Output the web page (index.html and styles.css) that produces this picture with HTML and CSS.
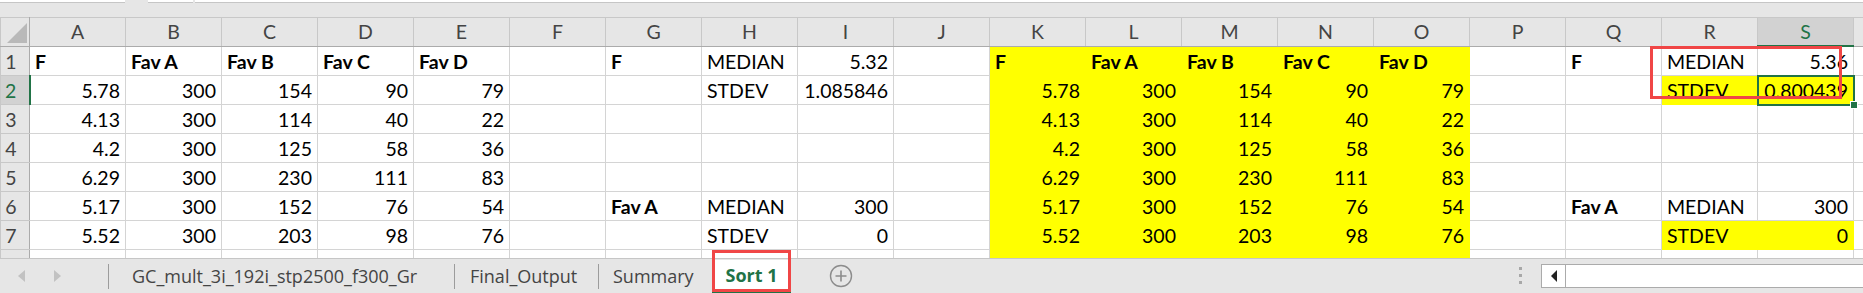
FILE: index.html
```html
<!DOCTYPE html>
<html lang="en">
<head>
  <meta charset="UTF-8">
  <title>Sort 1 - Excel</title>
  <link rel="stylesheet" href="styles.css">
</head>
<body>
  <!-- formula bar edge -->
  <div class="topbar">
    <div class="fbox w1"></div>
    <div class="fbox w2"></div>
    <div class="fbox w3"></div>
  </div>

  <!-- worksheet -->
  <div class="sheet">
    <table class="grid">
      <colgroup>
        <col class="c-rn">
        <col class="c"><col class="c"><col class="c"><col class="c"><col class="c">
        <col class="c"><col class="c"><col class="c"><col class="c"><col class="c">
        <col class="c"><col class="c"><col class="c"><col class="c"><col class="c">
        <col class="c"><col class="c"><col class="c"><col class="c">
        <col class="c-t">
      </colgroup>
      <tr class="hdr">
        <th class="corner"><svg width="29" height="27" viewBox="0 0 29 27"><polygon points="6,25 26,25 26,5" fill="#b9b9b9"/></svg></th>
        <th>A</th><th>B</th><th>C</th><th>D</th><th>E</th><th>F</th><th>G</th><th>H</th><th>I</th><th>J</th>
        <th>K</th><th>L</th><th>M</th><th>N</th><th>O</th><th>P</th><th>Q</th><th>R</th><th class="cur">S</th><th></th>
      </tr>
      <tr>
        <th class="rn">1</th>
        <td class="b">F</td><td class="b">Fav A</td><td class="b">Fav B</td><td class="b">Fav C</td><td class="b">Fav D</td>
        <td></td><td class="b">F</td><td>MEDIAN</td><td class="n">5.32</td><td></td>
        <td class="y b">F</td><td class="y b">Fav A</td><td class="y b">Fav B</td><td class="y b">Fav C</td><td class="y b">Fav D</td>
        <td></td><td class="b">F</td><td>MEDIAN</td><td class="n">5.36</td><td></td>
      </tr>
      <tr>
        <th class="rn cur">2</th>
        <td class="n">5.78</td><td class="n">300</td><td class="n">154</td><td class="n">90</td><td class="n">79</td>
        <td></td><td></td><td>STDEV</td><td class="n">1.085846</td><td></td>
        <td class="y n">5.78</td><td class="y n">300</td><td class="y n">154</td><td class="y n">90</td><td class="y n">79</td>
        <td></td><td></td><td class="y">STDEV</td><td class="y n sel">0.800439</td><td></td>
      </tr>
      <tr>
        <th class="rn">3</th>
        <td class="n">4.13</td><td class="n">300</td><td class="n">114</td><td class="n">40</td><td class="n">22</td>
        <td></td><td></td><td></td><td></td><td></td>
        <td class="y n">4.13</td><td class="y n">300</td><td class="y n">114</td><td class="y n">40</td><td class="y n">22</td>
        <td></td><td></td><td></td><td></td><td></td>
      </tr>
      <tr>
        <th class="rn">4</th>
        <td class="n">4.2</td><td class="n">300</td><td class="n">125</td><td class="n">58</td><td class="n">36</td>
        <td></td><td></td><td></td><td></td><td></td>
        <td class="y n">4.2</td><td class="y n">300</td><td class="y n">125</td><td class="y n">58</td><td class="y n">36</td>
        <td></td><td></td><td></td><td></td><td></td>
      </tr>
      <tr>
        <th class="rn">5</th>
        <td class="n">6.29</td><td class="n">300</td><td class="n">230</td><td class="n">111</td><td class="n">83</td>
        <td></td><td></td><td></td><td></td><td></td>
        <td class="y n">6.29</td><td class="y n">300</td><td class="y n">230</td><td class="y n">111</td><td class="y n">83</td>
        <td></td><td></td><td></td><td></td><td></td>
      </tr>
      <tr>
        <th class="rn">6</th>
        <td class="n">5.17</td><td class="n">300</td><td class="n">152</td><td class="n">76</td><td class="n">54</td>
        <td></td><td class="b">Fav A</td><td>MEDIAN</td><td class="n">300</td><td></td>
        <td class="y n">5.17</td><td class="y n">300</td><td class="y n">152</td><td class="y n">76</td><td class="y n">54</td>
        <td></td><td class="b">Fav A</td><td>MEDIAN</td><td class="n">300</td><td></td>
      </tr>
      <tr>
        <th class="rn">7</th>
        <td class="n">5.52</td><td class="n">300</td><td class="n">203</td><td class="n">98</td><td class="n">76</td>
        <td></td><td></td><td>STDEV</td><td class="n">0</td><td></td>
        <td class="y n">5.52</td><td class="y n">300</td><td class="y n">203</td><td class="y n">98</td><td class="y n">76</td>
        <td></td><td></td><td class="y">STDEV</td><td class="y n">0</td><td></td>
      </tr>
      <tr>
        <th class="rn">8</th>
        <td class="n">5.93</td><td class="n">300</td><td class="n">189</td><td class="n">92</td><td class="n">83</td>
        <td></td><td></td><td></td><td></td><td></td>
        <td class="y n">5.93</td><td class="y n">300</td><td class="y n">189</td><td class="y n">92</td><td class="y n">83</td>
        <td></td><td></td><td></td><td></td><td></td>
      </tr>
    </table>
  </div>

  <!-- sheet tabs -->
  <div class="tabs">
    <div class="nav">
      <span class="arrow left"></span>
      <span class="arrow right"></span>
    </div>
    <span class="sep"></span>
    <div class="tab t1">GC_mult_3i_192i_stp2500_f300_Gr</div>
    <span class="sep"></span>
    <div class="tab t2">Final_Output</div>
    <span class="sep"></span>
    <div class="tab t3">Summary</div>
    <div class="tab active">Sort 1</div>
    <svg class="add" width="24" height="24" viewBox="0 0 24 24">
      <circle cx="12" cy="12" r="10.5" fill="none" stroke="#8c8c8c" stroke-width="1.4"/>
      <path d="M12 6.5v11M6.5 12h11" stroke="#8c8c8c" stroke-width="1.6"/>
    </svg>
    <svg class="grip" width="4" height="18" viewBox="0 0 4 18">
      <rect x="0" y="0" width="3" height="3" fill="#a8a8a8"/>
      <rect x="0" y="7" width="3" height="3" fill="#a8a8a8"/>
      <rect x="0" y="14" width="3" height="3" fill="#a8a8a8"/>
    </svg>
    <div class="hscroll">
      <div class="sbtn"><span class="tri"></span></div>
    </div>
  </div>

  <!-- annotation boxes -->
  <div class="mark mark-stats"></div>
  <div class="mark mark-tab"></div>
</body>
</html>
```

FILE: styles.css
```css
body {
  margin: 0;
  width: 1863px;
  height: 293px;
  overflow: hidden;
  position: relative;
  background-color: #fff;
  font-family: Lato, "Liberation Sans", sans-serif;
  color: #000;
}

.topbar {
  height: 17px;
  background-color: #e6e6e6;
  display: flex;
  align-items: flex-start;
}
.fbox {
  height: 2px;
  background-color: #fff;
  border-bottom: 1px solid #c6c6c6;
}
.w1 { width: 125px; margin-right: 23px; }
.w2 { width: 45px; margin-right: 2px; }
.w3 { flex: 1; }

.sheet {
  height: 241px;
  overflow: hidden;
}
.grid {
  border-collapse: collapse;
  table-layout: fixed;
  width: 1863px;
}
.c-rn { width: 29px; }
.c { width: 96px; }
.c-t { width: 10px; }

.grid td,
.grid th {
  height: 28px;
  padding: 0 5px;
  border: 1px solid #d4d4d4;
  white-space: nowrap;
  overflow: hidden;
  font-size: 19.5px;
  line-height: 26px;
  vertical-align: bottom;
  text-align: left;
}
.grid .hdr th {
  height: 27px;
  background-color: #e6e6e6;
  border-color: #c8c8c8;
  border-bottom-color: #ababab;
  color: #444;
  font-weight: normal;
  text-align: center;
  vertical-align: middle;
  line-height: 24px;
}
.grid .hdr th.corner {
  padding: 0;
  border-right-color: #ababab;
}
.corner svg { display: block; }
.grid .hdr th.cur {
  background-color: #d2d2d2;
  color: #217346;
  border-bottom: 2px solid #217346;
}
.grid th.rn {
  background-color: #e6e6e6;
  border-color: #c8c8c8;
  border-right-color: #ababab;
  color: #444;
  font-weight: normal;
  text-align: center;
  padding: 0 8px 0 0;
}
.grid th.rn.cur {
  background-color: #d2d2d2;
  color: #217346;
  border-right: 2px solid #217346;
}

.grid td.b { font-weight: bold; }
.grid td.n { text-align: right; }
.grid td.y {
  background-color: #ffff00;
  border-color: #ffff00;
}
.grid td.sel {
  position: relative;
  overflow: visible;
  outline: 2px solid #217346;
  outline-offset: -1px;
}
.grid td.sel::after {
  content: "";
  position: absolute;
  right: -5px;
  bottom: -5px;
  width: 6px;
  height: 6px;
  background-color: #217346;
  border: 1px solid #fff;
}

.tabs {
  height: 35px;
  box-sizing: border-box;
  border-top: 1px solid #c6c6c6;
  background-color: #e6e6e6;
  display: flex;
  align-items: center;
  font-family: "Open Sans", "Noto Sans", sans-serif;
  font-size: 18px;
  color: #444;
}
.nav {
  width: 108px;
  display: flex;
  align-items: center;
}
.arrow {
  width: 0;
  height: 0;
  border-top: 6px solid transparent;
  border-bottom: 6px solid transparent;
}
.arrow.left {
  margin-left: 18px;
  border-right: 7px solid #c2c2c2;
}
.arrow.right {
  margin-left: 29px;
  border-left: 7px solid #c2c2c2;
}
.sep {
  width: 1px;
  height: 25px;
  background-color: #9c9c9c;
}
.tab {
  box-sizing: border-box;
  white-space: nowrap;
  overflow: hidden;
}
.t1 { width: 345px; padding-left: 23px; }
.t2 { width: 143px; padding-left: 15px; }
.t3 { width: 113px; padding-left: 14px; }
.tab.active {
  width: 79px;
  height: 33px;
  line-height: 31px;
  text-align: center;
  background-color: #fff;
  color: #217346;
  font-weight: bold;
  box-shadow: inset 0 -3px 0 #217346;
}
.add { margin-left: 38px; }
.grip { margin-left: auto; margin-right: 18px; }
.hscroll {
  width: 322px;
  height: 24px;
  box-sizing: border-box;
  border: 1px solid #ababab;
  border-right: none;
  background-color: #fff;
  display: flex;
}
.sbtn {
  width: 23px;
  border-right: 1px solid #ababab;
  display: flex;
  align-items: center;
  justify-content: center;
}
.tri {
  width: 0;
  height: 0;
  border-top: 6px solid transparent;
  border-bottom: 6px solid transparent;
  border-right: 6px solid #222;
}

.mark {
  position: absolute;
  border: 3px solid #f04646;
}
.mark-stats {
  left: 1650px;
  top: 46px;
  width: 186px;
  height: 47px;
}
.mark-tab {
  left: 712px;
  top: 250px;
  width: 73px;
  height: 36px;
}
```
